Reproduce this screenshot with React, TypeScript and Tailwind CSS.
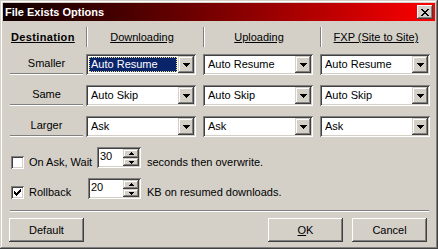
import React from "react";

const sunken =
  "shadow-[inset_1px_1px_#808080,inset_-1px_-1px_#ffffff,inset_2px_2px_#404040,inset_-2px_-2px_#d4d0c8]";
const raisedBtn =
  "shadow-[inset_-1px_-1px_#404040,inset_1px_1px_#ffffff,inset_-2px_-2px_#808080,inset_2px_2px_#d4d0c8]";
const raisedSmall =
  "shadow-[inset_-1px_-1px_#404040,inset_1px_1px_#d4d0c8,inset_-2px_-2px_#808080,inset_2px_2px_#ffffff]";

function DownArrow() {
  return (
    <svg width="7" height="4" viewBox="0 0 7 4" shapeRendering="crispEdges">
      <rect x="0" y="0" width="7" height="1" fill="#000" />
      <rect x="1" y="1" width="5" height="1" fill="#000" />
      <rect x="2" y="2" width="3" height="1" fill="#000" />
      <rect x="3" y="3" width="1" height="1" fill="#000" />
    </svg>
  );
}

function SpinUp() {
  return (
    <svg width="5" height="3" viewBox="0 0 5 3" shapeRendering="crispEdges">
      <rect x="2" y="0" width="1" height="1" fill="#000" />
      <rect x="1" y="1" width="3" height="1" fill="#000" />
      <rect x="0" y="2" width="5" height="1" fill="#000" />
    </svg>
  );
}

function SpinDown() {
  return (
    <svg width="5" height="3" viewBox="0 0 5 3" shapeRendering="crispEdges">
      <rect x="0" y="0" width="5" height="1" fill="#000" />
      <rect x="1" y="1" width="3" height="1" fill="#000" />
      <rect x="2" y="2" width="1" height="1" fill="#000" />
    </svg>
  );
}

function CloseX() {
  const px: [number, number, number][] = [
    [0, 0, 2], [6, 0, 2],
    [1, 1, 2], [5, 1, 2],
    [2, 2, 4],
    [3, 3, 2],
    [2, 4, 4],
    [1, 5, 2], [5, 5, 2],
    [0, 6, 2], [6, 6, 2],
  ];
  return (
    <svg width="8" height="7" viewBox="0 0 8 7" shapeRendering="crispEdges">
      {px.map(([x, y, w], i) => (
        <rect key={i} x={x} y={y} width={w} height={1} fill="#000" />
      ))}
    </svg>
  );
}

function Combo({ value, selected }: { value: string; selected?: boolean }) {
  return (
    <div className={`flex h-[21px] w-[110px] bg-white p-[2px] ${sunken}`}>
      <div className="min-w-0 flex-1 p-[1px]">
        {selected ? (
          <div className="h-full border border-dotted border-[#e8d890] bg-[#0a246a] pl-[1px] leading-[13px] text-white">
            {value}
          </div>
        ) : (
          <div className="h-full pl-[2px] leading-[15px]">{value}</div>
        )}
      </div>
      <div className={`flex h-[17px] w-[16px] items-center justify-center bg-[#d4d0c8] ${raisedSmall}`}>
        <DownArrow />
      </div>
    </div>
  );
}

function Spin({ value, width }: { value: string; width: string }) {
  return (
    <div className={`flex h-[21px] bg-white p-[2px] ${sunken} ${width}`}>
      <div className="min-w-0 flex-1 pl-[1px] leading-[14px]">{value}</div>
      <div className="flex w-[16px] flex-col">
        <div className={`flex h-[9px] items-center justify-center bg-[#d4d0c8] ${raisedSmall}`}>
          <SpinUp />
        </div>
        <div className={`flex h-[8px] items-center justify-center bg-[#d4d0c8] ${raisedSmall}`}>
          <SpinDown />
        </div>
      </div>
    </div>
  );
}

function Checkbox({ checked }: { checked?: boolean }) {
  return (
    <div className={`flex h-[13px] w-[13px] items-center justify-center bg-white ${sunken}`}>
      {checked && (
        <svg width="13" height="13" viewBox="0 0 13 13" shapeRendering="crispEdges">
          <path d="M3.5 5.5 L5.5 7.5 L9.5 3.5" stroke="#000" strokeWidth="1" fill="none" />
          <path d="M3.5 6.5 L5.5 8.5 L9.5 4.5" stroke="#000" strokeWidth="1" fill="none" />
          <path d="M3.5 7.5 L5.5 9.5 L9.5 5.5" stroke="#000" strokeWidth="1" fill="none" />
        </svg>
      )}
    </div>
  );
}

function RowLabel({ text }: { text: string }) {
  return (
    <div className="ml-[1px] flex h-[20px] w-[73px] items-center justify-center border-b border-[#808080] shadow-[0_1px_0_#ffffff]">
      {text}
    </div>
  );
}

function Header({ text }: { text: string }) {
  return (
    <div className="flex h-[20px] w-[110px]">
      <div className="h-[20px] w-[2px] border-l border-[#808080] bg-white" />
      <div className="flex-1 text-center leading-[20px] underline">{text}</div>
    </div>
  );
}

function Button({ children }: { children: React.ReactNode }) {
  return (
    <div className={`flex h-[24px] w-[75px] items-center justify-center bg-[#d4d0c8] ${raisedBtn}`}>
      {children}
    </div>
  );
}

export default function App() {
  const rows: { label: string; values: string[]; sel?: boolean }[] = [
    { label: "Smaller", values: ["Auto Resume", "Auto Resume", "Auto Resume"], sel: true },
    { label: "Same", values: ["Auto Skip", "Auto Skip", "Auto Skip"] },
    { label: "Larger", values: ["Ask", "Ask", "Ask"] },
  ];
  return (
    <div
      className={`flex h-[249px] w-[438px] flex-col bg-[#d4d0c8] p-[3px] text-[11px] text-black [font-family:'Liberation_Sans',Arial,sans-serif] shadow-[inset_-1px_-1px_#404040,inset_1px_1px_#d4d0c8,inset_-2px_-2px_#808080,inset_2px_2px_#ffffff]`}
    >
      <div className="flex h-[18px] items-center bg-linear-to-r from-[#100000] to-[#ff0000] pl-[2px] pr-[2px]">
        <span className="flex-1 font-bold leading-[18px] text-white">File Exists Options</span>
        <div className={`flex h-[14px] w-[16px] items-center justify-center bg-[#d4d0c8] ${raisedBtn}`}>
          <CloseX />
        </div>
      </div>

      <div className="flex flex-col pl-[6px]">
        <div className="mt-[6px] grid grid-cols-[77px_117px_117px_110px]">
          <div className="pl-[2px] font-bold leading-[20px] tracking-[0.35px] underline">Destination</div>
          <Header text="Downloading" />
          <Header text="Uploading" />
          <Header text="FXP (Site to Site)" />
        </div>

        <div className="mt-[7px] grid grid-cols-[77px_117px_117px_110px] gap-y-[10px]">
          {rows.map((r, ri) => (
            <React.Fragment key={r.label}>
              <RowLabel text={r.label} />
              {r.values.map((v, i) => (
                <Combo key={i} value={v} selected={r.sel && i === 0 && ri === 0} />
              ))}
            </React.Fragment>
          ))}
        </div>

        <div className="mt-[10px] flex items-start pl-[2px]">
          <div className="mt-[8px] flex h-[15px] w-[86px] items-center">
            <Checkbox />
            <span className="ml-[5px]">On Ask, Wait</span>
          </div>
          <Spin value="30" width="w-[44px]" />
          <div className="ml-[6px] mt-[8px] flex h-[15px] items-center">seconds then overwrite.</div>
        </div>

        <div className="mt-[8px] flex items-start pl-[2px]">
          <div className="mt-[7px] flex h-[15px] w-[77px] items-center">
            <Checkbox checked />
            <span className="ml-[5px]">Rollback</span>
          </div>
          <Spin value="20" width="w-[53px]" />
          <div className="ml-[6px] mt-[7px] flex h-[15px] items-center">KB on resumed downloads.</div>
        </div>

        <div className="ml-[1px] mt-[10px] h-[2px] w-[419px] border-t border-[#808080] bg-white" />

        <div className="mt-[6px] flex w-[418px] justify-between">
          <Button>Default</Button>
          <div className="flex gap-[9px]">
            <Button>
              <span>
                <span className="underline">O</span>K
              </span>
            </Button>
            <Button>Cancel</Button>
          </div>
        </div>
      </div>
    </div>
  );
}
